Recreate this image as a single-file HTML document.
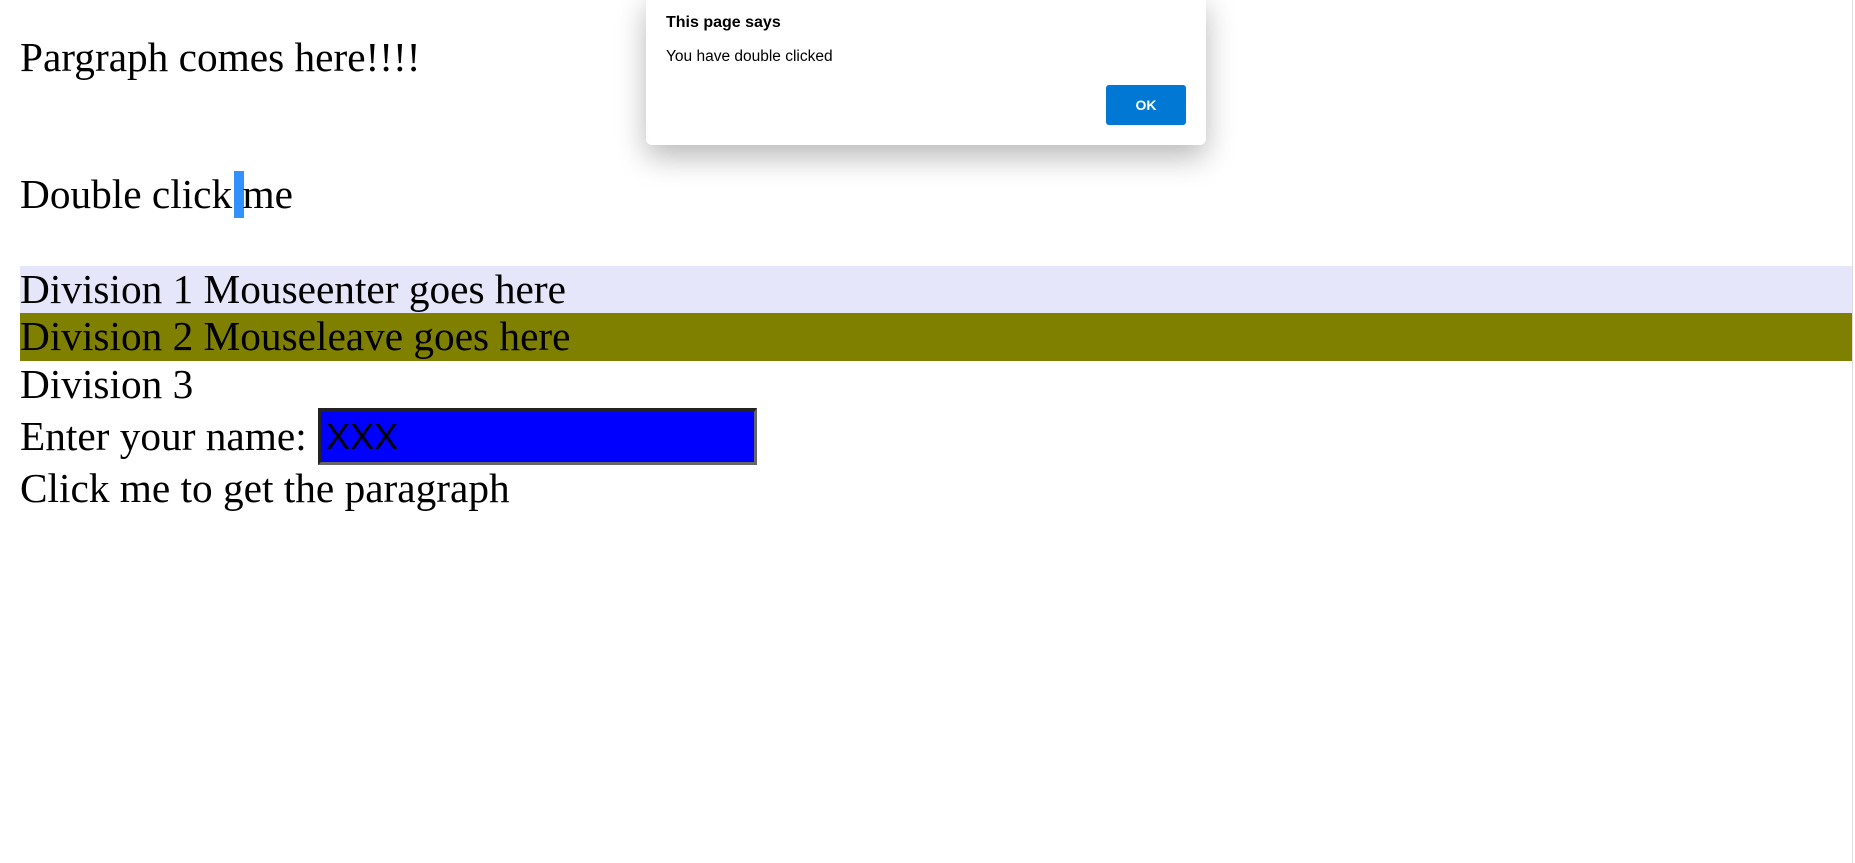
<!DOCTYPE html>
<html><head><style>
html,body{margin:0;padding:0;width:1855px;height:863px;overflow:hidden;background:#fff;}
body{font-family:"Liberation Serif",serif;font-size:41.3px;color:#000;position:relative;}
.l{position:absolute;left:20px;height:47px;line-height:47px;white-space:nowrap;}
.full{width:1832px;}
#sb{position:absolute;left:1852px;top:0;width:1px;height:863px;background:#ddd;}
#inp{position:absolute;left:318px;top:408px;height:50px;background:#00f;border-style:solid;border-width:4px 3px 3px 3px;border-color:#222 #666 #666 #222;font-family:"Liberation Sans",sans-serif;font-size:36px;line-height:50px;padding-left:5px;box-sizing:content-box;width:428px;}
#sel{position:absolute;left:234px;top:171px;width:10px;height:47px;background:#3390ff;}
#dlg{position:absolute;left:646px;top:-6px;width:560px;height:151px;background:#fff;border-radius:6px;box-shadow:0 12px 30px rgba(0,0,0,0.28);font-family:"Liberation Sans",sans-serif;}
#dlg .t{position:absolute;left:20px;top:20px;font-size:16px;font-weight:bold;}
#dlg .m{position:absolute;left:20px;top:54px;font-size:15.5px;}
#dlg .b{position:absolute;left:460px;top:91px;width:80px;height:40px;background:#0078d4;border-radius:3px;color:#fff;font-size:14px;font-weight:bold;text-align:center;line-height:40px;}
</style></head><body>
<div class="l" style="top:34px">Pargraph comes here!!!!</div>
<div id="sel"></div>
<div class="l" style="top:171px">Double click me</div>
<div class="l full" style="top:266px;background:#e6e6fa">Division 1 Mouseenter goes here</div>
<div class="l full" style="top:313px;height:48px;background:#808000">Division 2 Mouseleave goes here</div>
<div class="l" style="top:361px">Division 3</div>
<div class="l" style="top:413px">Enter your name:</div>
<div id="inp">XXX</div>
<div class="l" style="top:465px">Click me to get the paragraph</div>
<div id="sb"></div>
<div id="dlg"><div class="t">This page says</div><div class="m">You have double clicked</div><div class="b">OK</div></div>
</body></html>
